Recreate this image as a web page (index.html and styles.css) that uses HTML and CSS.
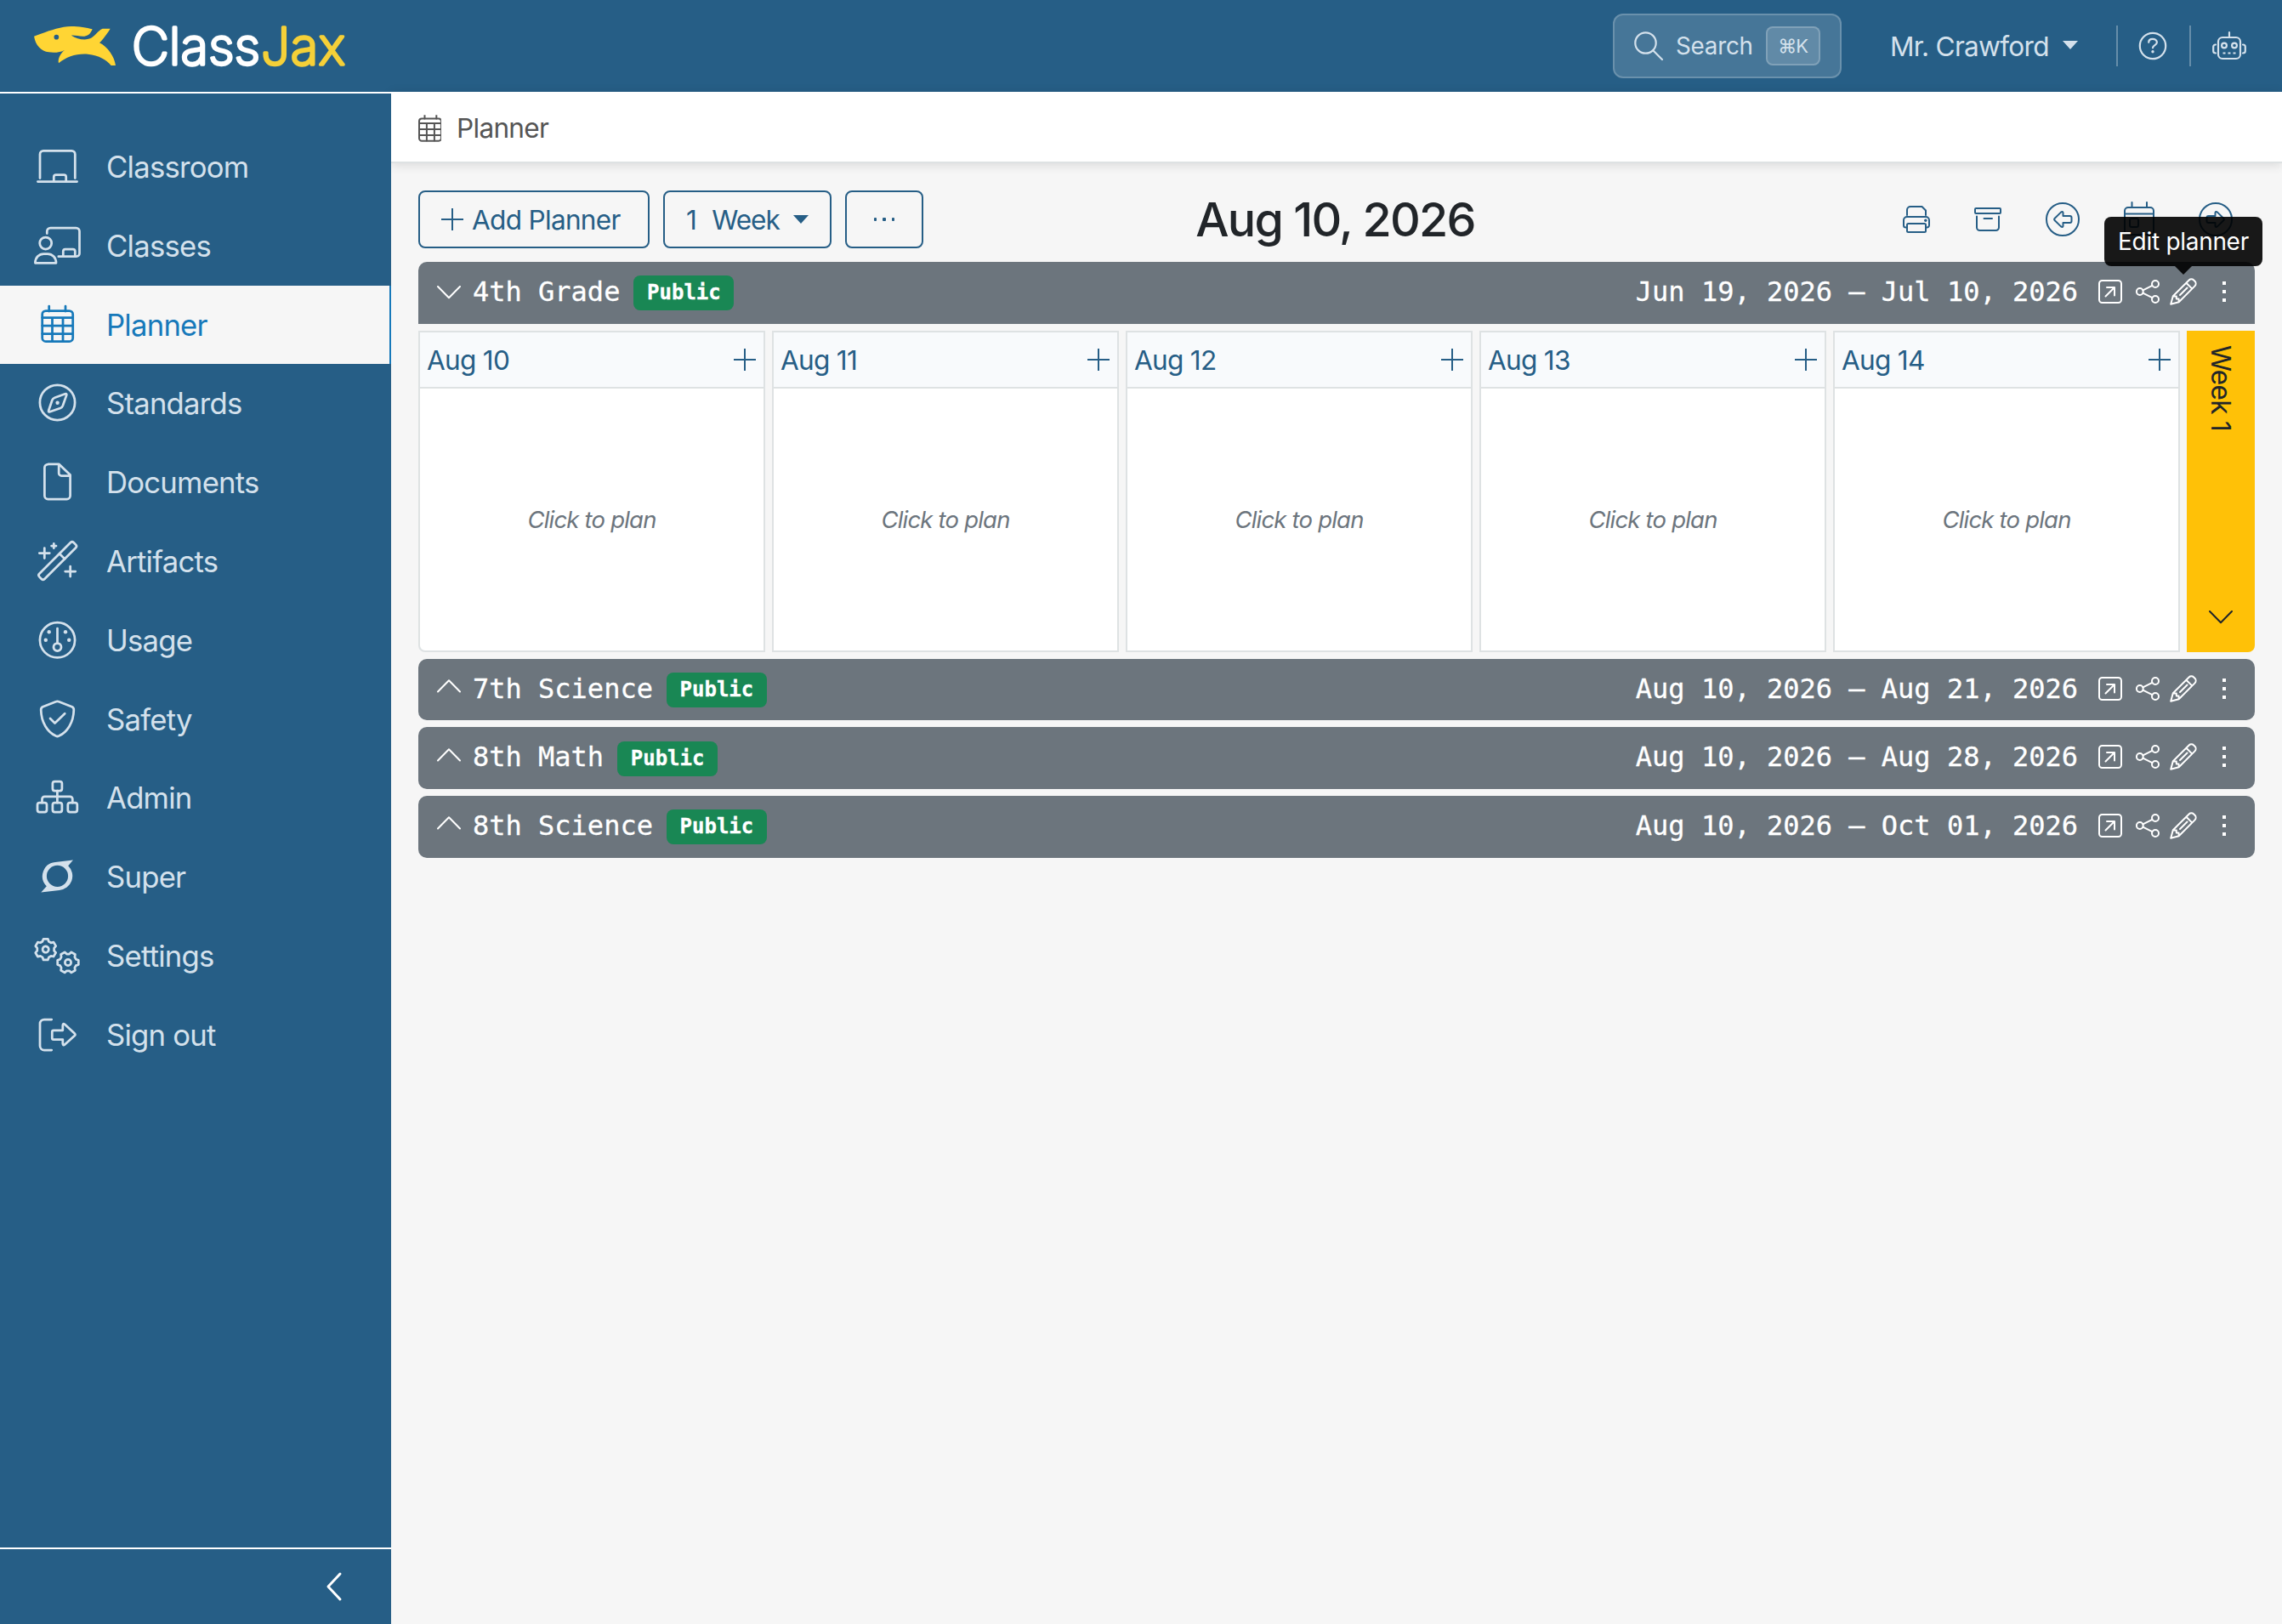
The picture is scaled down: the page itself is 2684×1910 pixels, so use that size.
FILE: index.html
```html
<!DOCTYPE html>
<html lang="en">
<head>
<meta charset="utf-8">
<title>ClassJax – Planner</title>
<link rel="stylesheet" href="styles.css">
</head>
<body>
<svg class="sprite" aria-hidden="true">
  <symbol id="calendar" viewBox="0 0 39 44"><path d="M12.3 0v6M31.3 0v6M3.4 13.6h35.6M3.4 23.1h35.6M3.4 32.9h35.6M15.6 13.6v28M28 13.6v28"/><rect x="3.4" y="6" width="35.6" height="36" rx="4.2"/></symbol>
  <symbol id="expand" viewBox="0 0 28 28"><rect x="1" y="1" width="26" height="26" rx="3.5"/><path d="M8.5 19.5 19 9M10 9h9v9.5"/></symbol>
  <symbol id="share" viewBox="0 0 28 28"><circle cx="4.8" cy="14" r="3.9"/><circle cx="23" cy="5" r="4"/><circle cx="23" cy="23" r="4"/><path d="M8.4 12.3 19.4 6.8M8.4 15.7l11 5.5"/></symbol>
  <symbol id="pencil" viewBox="0 0 32 32"><path d="M1.2 30.8 3.8 21.3 22.6 2.5a4 4 0 0 1 5.6 0L29.5 3.8a4 4 0 0 1 0 5.6L10.7 28.2zM19.4 5.7l6.900 6.900M12 20l8.500-8.500M4 21.200l3.800.3v2.900h2.700l.2 3.800"/></symbol>
  <symbol id="dots" viewBox="0 0 4 24"><path class="fill" d="M0 0h4v4H0zM0 10h4v4H0zM0 20h4v4H0z"/></symbol>
  <symbol id="down" viewBox="0 0 28 16"><path d="M1 1l13 13.2L27 1"/></symbol>
  <symbol id="up" viewBox="0 0 28 16"><path d="M1 14.5 14 1.3l13 13.2"/></symbol>
  <symbol id="plus" viewBox="0 0 26 26"><path d="M13 0v26M0 13h26"/></symbol>
  <symbol id="gear" viewBox="-14 -14 28 28"><path d="M12.3-2.6V2.6L9.3 3.7 7.9 6.2 8.4 9.4 3.9 12 1.5 9.9h-3L-3.9 12-8.4 9.4-7.9 6.2-9.3 3.7-12.3 2.6V-2.6L-9.3-3.7-7.9-6.2-8.4-9.4-3.9-12-1.5-9.9h3L3.9-12 8.4-9.4 7.9-6.2 9.3-3.7z"/><circle r="3.6"/></symbol>
</svg>

<header class="topbar">
  <a class="brand">
    <svg class="fish" viewBox="120 90 290 145"><path fill="#ffd534" d="M120 128C150 117 190 101 225 95C260 90 300 97 326 103C320 118 312 127 298 128C280 129 265 124 252 125C270 138 300 143 318 136C335 128 345 108 362 101L389 101C378 120 362 140 351 151C380 165 404 200 408 231L392 231C375 210 350 196 310 191C270 188 235 200 207 223C203 208 212 190 228 176C215 185 190 187 172 184C145 180 125 160 120 128Z"/><circle cx="199" cy="131" r="8.5" fill="#265e86"/></svg>
    <svg class="wordmark" viewBox="0 0 260 60"><text x="1" y="51.500" fill="#fff" stroke="#fff">Class</text><text x="153" y="51.500" fill="#f5d038" stroke="#f5d038" textLength="99">Jax</text></svg>
  </a>
  <div class="top-right">
    <button class="search">
      <svg class="ic thin" width="34" height="34" viewBox="0 0 34 34"><circle cx="13.5" cy="13.5" r="12.2"/><path d="M22.5 22.5 33 33"/></svg>
      <span class="search-label">Search</span><kbd>⌘K</kbd>
    </button>
    <span class="user"><span>Mr. Crawford</span><i class="caret"></i></span>
    <span class="top-icon"><svg class="ic" width="34" height="34" viewBox="0 0 34 34"><circle cx="17" cy="17" r="15.2"/><path d="M12.200 12.800c0-2.400 1.800-4 4.600-4s5.100 1.500 5.100 4c0 3.300-4.900 3.300-4.900 6.500"/><circle class="fill" cx="17" cy="23.700" r="1.700"/></svg></span>
    <span class="top-icon robot"><svg class="ic" width="40" height="34" viewBox="0 0 40 34"><path d="M20 1v6"/><rect x="7" y="7" width="26" height="25" rx="5"/><circle cx="14" cy="16.500" r="2.900"/><circle cx="26" cy="16.500" r="2.900"/><path d="M4 15.500C2 15.500 1.200 16.500 1.200 18v5c0 1.500.8 2.500 2.800 2.500M36 15.500c2 0 2.800 1 2.800 2.500v5c0 1.500-.8 2.500-2.800 2.500"/><path d="M12.500 25.500h3M18.500 25.500h3M24.500 25.500h3" class="butt"/></svg></span>
  </div>
</header>

<div class="shell">
<aside class="sidebar">
  <nav>
    <a class="item"><svg viewBox="0 0 55 44"><path d="M7 35.500V7.400a4 4 0 0 1 4-4H44.300a4 4 0 0 1 4 4V35.500M4.400 39.500H50.600M23.300 39V34a2.500 2.500 0 0 1 2.500-2.500h9.400a2.500 2.500 0 0 1 2.500 2.500V39"/></svg>Classroom</a>
    <a class="item"><svg viewBox="0 0 55 44"><circle cx="13.700" cy="19" r="7"/><path d="M1.400 42.300c0-6.500 4.500-10.800 10-10.800h4.600c5.500 0 10 4.300 10 10.800zM15.300 7.500V5a4 4 0 0 1 4-4H49.500a4 4 0 0 1 4 4V31a3.700 3.700 0 0 1-3.700 3.700H28.800M34.300 34v-5.500a2.500 2.500 0 0 1 2.500-2.500h9a2.500 2.500 0 0 1 2.500 2.500V34"/></svg>Classes</a>
    <a class="item active"><svg viewBox="0 0 55 44"><path d="M17.700 0v6M37 0v6M9.700 13.600h36M9.700 23h36M9.700 32.600h36M21.500 13.600v28M34 13.600v28"/><rect x="9.700" y="5.600" width="36" height="36" rx="4.200"/></svg>Planner</a>
    <a class="item"><svg viewBox="0 0 55 44"><circle cx="27.500" cy="21.400" r="20.600"/><path d="M36.600 11.300 24.300 15.700Q22.200 16.500 21.400 18.500L17.200 30.800Q16.600 33 18.800 32.300L31 28Q33 27.200 33.800 25.200L38.200 12.900Q38.900 10.600 36.600 11.300z"/><circle class="fill" cx="27.600" cy="21.800" r="2.200"/></svg>Standards</a>
    <a class="item"><svg viewBox="0 0 55 44"><path d="M16.600.9H29.500L42.600 13.500V38a4 4 0 0 1-4 4H16.400a4 4 0 0 1-4-4V5a4 4 0 0 1 4-4zM29.200 1V11.500a3 3 0 0 0 3 3H42.600"/></svg>Documents</a>
    <a class="item"><svg viewBox="0 0 55 44"><rect x="-.8" y="17.200" width="57" height="8.600" rx="2.500" transform="rotate(-45 27.700 21.500)"/><path d="M30 13.200l6.200 6.200M12.300 6.500v12M6.300 12.500h12M23.300 1.300v5.400M20.600 4h5.400M42.700 28v12M36.700 34h12"/></svg>Artifacts</a>
    <a class="item"><svg viewBox="0 0 55 44"><circle cx="27.500" cy="21.800" r="20.600"/><path d="M27.500 8V25.500"/><circle cx="27.500" cy="30" r="4.500"/><g class="fill"><circle cx="17.700" cy="12.200" r="2.200"/><circle cx="37" cy="12.200" r="2.200"/><circle cx="13.800" cy="21.800" r="2.200"/><circle cx="41.200" cy="21.800" r="2.200"/></g></svg>Usage</a>
    <a class="item"><svg viewBox="0 0 55 44"><path d="M25.700 1.200Q27.500.4 29.300 1.200L44.600 7.300Q46.900 8.300 46.800 11C46.500 26 39 37 29.300 41.600Q27.500 42.400 25.700 41.600C16 37 8.500 26 8.200 11Q8.100 8.300 10.400 7.300zM19 21l5.500 5.500L36.200 15.300"/></svg>Safety</a>
    <a class="item"><svg viewBox="0 0 55 44"><rect x="21.900" y="3" width="11" height="11" rx="2.500"/><rect x="4" y="28" width="11" height="11" rx="2.500"/><rect x="21.900" y="28" width="11" height="11" rx="2.500"/><rect x="39.800" y="28" width="11" height="11" rx="2.500"/><path d="M27.400 14v14M9.500 28v-4a3 3 0 0 1 3-3.200H42.300a3 3 0 0 1 3 3.200v4"/></svg>Admin</a>
    <a class="item"><svg viewBox="0 0 55 44"><path class="fill" fill-rule="evenodd" d="M46 2.400 25 4.900A16.700 16.700 0 0 0 14.800 33.300L8.300 40.600 29.800 37.900A16.700 16.700 0 0 0 40.200 9.300zM27.500 8.700a12.600 12.600 0 1 1 0 25.200a12.600 12.600 0 1 1 0-25.200z"/></svg>Super</a>
    <a class="item"><svg viewBox="0 0 55 44"><use href="#gear" x="-14" y="-14" width="28" height="28" transform="translate(13.700 14.600) rotate(30)"/><use href="#gear" x="-14" y="-14" width="28" height="28" transform="translate(40 29.900)"/></svg>Settings</a>
    <a class="item"><svg viewBox="0 0 55 44"><path d="M20.700 4H12a5 5 0 0 0-5 5V35a5 5 0 0 0 5 5H20.700M22.900 16.800H33.800V11q.2-2.800 2.400-1.200L47.800 20.600q1.200 1.200 0 2.400L36.200 33.500q-2.200 1.500-2.400-1.200V27.500H22.900a1.600 1.600 0 0 1-1.600-1.600V18.400a1.600 1.600 0 0 1 1.600-1.600z"/></svg>Sign out</a>
  </nav>
  <div class="collapse"><svg class="ic" width="18" height="34" viewBox="0 0 18 34"><path d="M16 2 2 17 16 32"/></svg></div>
</aside>

<main>
  <div class="crumb"><svg class="ic" width="28" height="32" viewBox="2 0 38.500 43.500"><use href="#calendar" width="39" height="44"/></svg>Planner</div>
  <section class="content">
    <div class="toolbar">
      <div class="left">
        <button class="btn add"><svg class="ic" width="26" height="26"><use href="#plus"/></svg><span>Add Planner</span></button>
        <button class="btn week"><span>1</span><span>Week</span><i class="caret"></i></button>
        <button class="btn more"><i></i><i></i><i></i></button>
      </div>
      <h1>Aug 10, 2026</h1>
      <div class="tools">
        <svg class="ic" width="32" height="32" viewBox="0 0 32 32"><path d="M5 11V5a4 4 0 0 1 4-4H22.500l4.500 4.500V11M4.500 25.500H3.500a2.500 2.500 0 0 1-2.500-2.500V17a4 4 0 0 1 4-4H27a4 4 0 0 1 4 4V23a2.500 2.500 0 0 1-2.500 2.500H27.500"/><rect x="5" y="21" width="22" height="10" rx="1.500"/><circle class="fill" cx="26.800" cy="17.200" r="1.700"/></svg>
        <svg class="ic" width="32" height="28" viewBox="0 0 32 28"><rect x="1" y="1" width="30" height="6" rx="1"/><path d="M3 10.500V23.500a3.500 3.500 0 0 0 3.500 3.500H25.500a3.500 3.500 0 0 0 3.500-3.500V10.500M11.500 13h9.500"/></svg>
        <svg class="ic" width="40" height="40" viewBox="0 0 40 40"><circle cx="20" cy="20" r="19"/><path d="M10.500 19 18 11.600Q20 10.300 20.500 12V16H28.500a2 2 0 0 1 2 2V22a2 2 0 0 1-2 2H20.500V28Q20 29.700 18 28.400L10.500 21Q9.700 20 10.500 19z"/></svg>
        <svg class="ic" width="36" height="40" viewBox="0 0 36 40"><path d="M9.500 0v6M27 0v6M1 13.500H35"/><rect x="1" y="6" width="34" height="32" rx="4"/><rect x="7" y="19" width="10" height="10" rx="2"/></svg>
        <svg class="ic" width="40" height="40" viewBox="0 0 40 40"><circle cx="20" cy="20" r="19"/><path d="M29.500 19 22 11.600Q20 10.300 19.500 12V16H11.500a2 2 0 0 0-2 2V22a2 2 0 0 0 2 2H19.500V28Q20 29.700 22 28.400L29.500 21Q30.300 20 29.500 19z"/></svg>
      </div>
    </div>

    <article class="planner open">
      <div class="bar">
        <svg class="ic chev" width="28" height="16"><use href="#down"/></svg><span>4th Grade</span><span class="badge">Public</span>
        <time>Jun 19, 2026 – Jul 10, 2026</time>
        <svg class="ic" width="28" height="28"><use href="#expand"/></svg>
        <svg class="ic" width="28" height="28"><use href="#share"/></svg>
        <span class="edit"><svg class="ic" width="32" height="32"><use href="#pencil"/></svg><span class="tooltip">Edit planner</span></span>
        <svg class="ic dots" width="4" height="24"><use href="#dots"/></svg>
      </div>
      <div class="days">
        <div class="day"><div class="date"><span>Aug 10</span><svg class="ic" width="26" height="26"><use href="#plus"/></svg></div><div class="plan">Click to plan</div></div>
        <div class="day"><div class="date"><span>Aug 11</span><svg class="ic" width="26" height="26"><use href="#plus"/></svg></div><div class="plan">Click to plan</div></div>
        <div class="day"><div class="date"><span>Aug 12</span><svg class="ic" width="26" height="26"><use href="#plus"/></svg></div><div class="plan">Click to plan</div></div>
        <div class="day"><div class="date"><span>Aug 13</span><svg class="ic" width="26" height="26"><use href="#plus"/></svg></div><div class="plan">Click to plan</div></div>
        <div class="day"><div class="date"><span>Aug 14</span><svg class="ic" width="26" height="26"><use href="#plus"/></svg></div><div class="plan">Click to plan</div></div>
        <div class="week-tab"><span>Week 1</span><svg class="ic" width="28" height="16"><use href="#down"/></svg></div>
      </div>
    </article>

    <article class="planner">
      <div class="bar">
        <svg class="ic chev" width="28" height="16"><use href="#up"/></svg><span>7th Science</span><span class="badge">Public</span>
        <time>Aug 10, 2026 – Aug 21, 2026</time>
        <svg class="ic" width="28" height="28"><use href="#expand"/></svg>
        <svg class="ic" width="28" height="28"><use href="#share"/></svg>
        <span class="edit"><svg class="ic" width="32" height="32"><use href="#pencil"/></svg></span>
        <svg class="ic dots" width="4" height="24"><use href="#dots"/></svg>
      </div>
    </article>
    <article class="planner">
      <div class="bar">
        <svg class="ic chev" width="28" height="16"><use href="#up"/></svg><span>8th Math</span><span class="badge">Public</span>
        <time>Aug 10, 2026 – Aug 28, 2026</time>
        <svg class="ic" width="28" height="28"><use href="#expand"/></svg>
        <svg class="ic" width="28" height="28"><use href="#share"/></svg>
        <span class="edit"><svg class="ic" width="32" height="32"><use href="#pencil"/></svg></span>
        <svg class="ic dots" width="4" height="24"><use href="#dots"/></svg>
      </div>
    </article>
    <article class="planner">
      <div class="bar">
        <svg class="ic chev" width="28" height="16"><use href="#up"/></svg><span>8th Science</span><span class="badge">Public</span>
        <time>Aug 10, 2026 – Oct 01, 2026</time>
        <svg class="ic" width="28" height="28"><use href="#expand"/></svg>
        <svg class="ic" width="28" height="28"><use href="#share"/></svg>
        <span class="edit"><svg class="ic" width="32" height="32"><use href="#pencil"/></svg></span>
        <svg class="ic dots" width="4" height="24"><use href="#dots"/></svg>
      </div>
    </article>
  </section>
</main>
</div>
</body>
</html>
```
FILE: styles.css
```css
:root { --blue: #265e86; --pale: #d4e1ec; --grey: #6c757d; --line: #dee2e3; }
* { box-sizing: border-box; }
html, body { height: 100%; }
body {
  margin: 0; display: flex; flex-direction: column; background: #f6f6f6; color: #212529;
  font: 440 31.600px/48px Inter, "Liberation Sans", sans-serif; letter-spacing: -.720px;
}
svg { display: block; flex: none; overflow: visible; fill: none; stroke: currentColor; stroke-linecap: round; stroke-linejoin: round; }
.sprite { position: absolute; width: 0; height: 0; }
.ic { stroke-width: 2; }
.fill { fill: currentColor; stroke: none; }
.butt { stroke-linecap: butt; }
button { font: inherit; letter-spacing: inherit; color: inherit; background: none; border: 0; padding: 0; margin: 0; }
.caret { border: 9px solid transparent; border-top: 10px solid currentColor; border-bottom: 0; }

.topbar { flex: none; height: 108px; background: var(--blue); display: flex; justify-content: space-between; }
.brand { display: flex; padding: 30px 0 0 40px; }
.fish { width: 96.700px; height: 48.300px; stroke: none; }
.wordmark { width: 260px; height: 60px; margin: -6px 0 0 17px; font-family: Inter, sans-serif; font-weight: 200; font-size: 60.500px; letter-spacing: 0; stroke-width: 3.400; }
.top-right { display: flex; align-items: center; color: var(--pale); }
.top-right .ic { stroke-width: 2.200; }
.search {
  display: flex; align-items: center; width: 269px; height: 76px; padding-left: 23px;
  font-size: 27.800px; letter-spacing: -.250px;
  background: rgba(255,255,255,.15); border: 2px solid rgba(255,255,255,.2); border-radius: 12px;
}
.search-label { margin-left: 15px; }
kbd {
  display: flex; align-items: center; justify-content: center; width: 64px; height: 46px; margin-left: 15px;
  font: 440 22px/1 Inter, "DejaVu Sans", sans-serif; letter-spacing: -.800px;
  background: rgba(255,255,255,.15); border: 2px solid rgba(255,255,255,.2); border-radius: 8px;
}
.user { display: flex; align-items: center; margin-left: 57px; width: 266px; gap: 16px; }
.user span { padding-top: 2px; }
.user .caret { margin-top: -2px; }
.top-icon { display: flex; align-items: center; height: 48px; width: 86px; padding-left: 24px; border-left: 2px solid rgba(255,255,255,.3); }
.top-icon.robot { width: 109px; padding-left: 25px; }

.shell { flex: 1; min-height: 0; display: flex; }
.sidebar { position: relative; z-index: 1; width: 460px; flex: none; display: flex; flex-direction: column; background: var(--blue); border-top: 2px solid #fff; color: var(--pale); }
nav { flex: 1; padding-top: 39.600px; font-size: 34.700px; letter-spacing: -.780px; }
.item { display: flex; align-items: center; gap: 30px; height: 92.800px; padding-left: 40px; }
.item svg { width: 55px; height: 44px; stroke-width: 2.750; }
.item.active { height: 92px; margin-top: .8px; background: #f6f6f6; color: #1779ba; border-right: 2px solid #1779ba; }
.collapse { height: 90px; border-top: 2px solid #fff; color: #fff; display: flex; align-items: center; justify-content: flex-end; padding-right: 58px; }
.collapse .ic { stroke-width: 3; }

main { flex: 1; min-width: 0; }
.crumb { height: 84px; background: #fff; border-bottom: 2px solid var(--line); box-shadow: 0 2px 12px rgba(0,0,0,.12); display: flex; align-items: center; gap: 17px; padding: 3px 0 0 32px; color: #555; }
.crumb .ic { stroke-width: 2.750; }
.content { padding: 32px 32px 0; }
.toolbar { display: grid; grid-template-columns: 1fr auto 1fr; align-items: center; height: 68px; margin-bottom: 16px; color: var(--blue); }
.left { display: flex; gap: 16px; }
.btn { display: flex; align-items: center; height: 68px; border: 2px solid var(--blue); border-radius: 8px; }
.btn span { padding-top: 2px; }
.add { width: 272px; gap: 10px; padding-left: 25px; }
.week { width: 198px; padding-left: 25px; }
.week span + span { margin: 0 16px 0 18px; letter-spacing: -1px; }
.more { width: 92px; justify-content: center; gap: 7px; }
.more i { width: 3.500px; height: 3.500px; border-radius: 1px; background: currentColor; }
h1 { margin: 0 3px 0 0; font-size: 55.500px; line-height: 68px; font-weight: 540; letter-spacing: -1.750px; color: #212529; }
.tools { display: flex; align-items: center; justify-content: flex-end; gap: 52px; padding-right: 26px; }

.planner { margin-bottom: 8px; }
.bar {
  display: flex; align-items: center; height: 72.700px; padding: 0 34px 3px 22px; border-radius: 10px;
  background: var(--grey); color: #fff; font-family: "DejaVu Sans Mono", monospace; font-size: 32px; letter-spacing: 0;
}
.bar > span, .bar > time { -webkit-text-stroke: .3px currentColor; }
.open .bar { border-radius: 10px 10px 0 0; margin-bottom: 8px; }
.chev { margin: 0 14px 5px 0; }
.open .chev { margin: 2px 14px 0 0; }
.badge { margin: 4px 0 0 16px; width: 118px; height: 41px; border-radius: 8px; background: #198754; font-size: 24px; font-weight: 700; line-height: 40px; text-align: center; }
time { margin: 0 24px 0 auto; }
.bar > .ic + .ic { margin-left: 16px; }
.edit { position: relative; margin: 0 0 0 12px; }
.bar > .dots { margin-left: 30px; }
.tooltip {
  position: absolute; bottom: 46px; left: -77px; width: 186px; height: 58px; border-radius: 8px; z-index: 1;
  background: rgba(0,0,0,.9); font: 440 28px/58px Inter, sans-serif; letter-spacing: -.300px; text-align: center; -webkit-text-stroke: 0;
}
.tooltip::after { content: ""; position: absolute; top: 100%; left: 83px; border: 10px solid transparent; border-top-color: rgba(0,0,0,.9); border-bottom: 0; }

.days { display: grid; grid-template-columns: repeat(5, 408px) 80px; gap: 8px; height: 378px; }
.day { display: flex; flex-direction: column; border: 2px solid var(--line); background: #fff; }
.day:first-child { border-bottom-left-radius: 8px; }
.date { display: flex; align-items: center; justify-content: space-between; height: 66px; padding: 0 9px 0 8px; background: #f8fafc; border-bottom: 2px solid var(--line); color: var(--blue); }
.date span { padding-top: 2px; }
.plan { flex: 1; display: flex; align-items: center; justify-content: center; font-size: 27.500px; font-style: italic; letter-spacing: -.800px; color: var(--grey); }
.week-tab { display: flex; flex-direction: column; justify-content: space-between; align-items: center; padding: 17px 0 33px; background: #ffc107; border-bottom-right-radius: 8px; }
.week-tab span { writing-mode: vertical-rl; }
```
